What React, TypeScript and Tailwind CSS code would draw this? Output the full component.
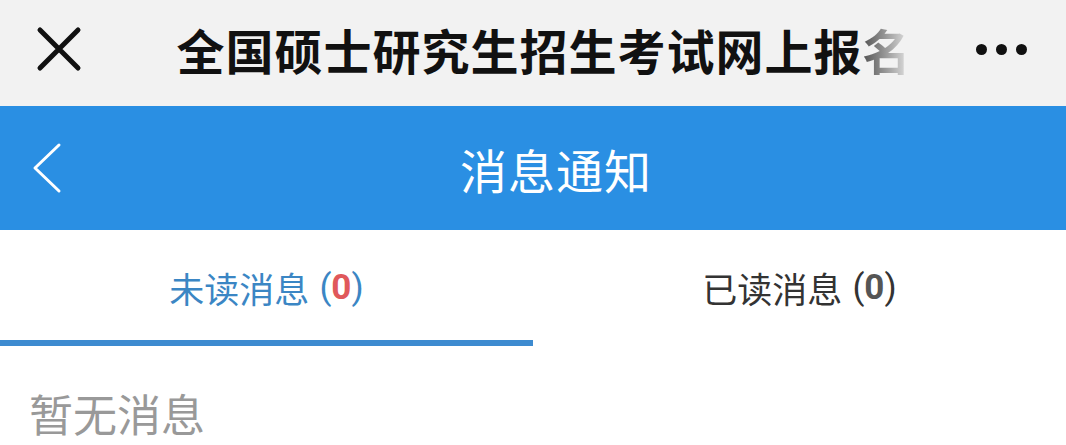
import React, { useState } from 'react';

const cjk = { fontFamily: '"Noto Sans CJK SC", "Noto Sans", sans-serif' };

const App = () => {
  const [tab, setTab] = useState(0);

  return (
    <div className="w-[1066px] h-[445px] overflow-hidden bg-white" style={cjk}>
      {/* wechat top bar */}
      <div className="h-[106px] bg-[#f2f2f2] flex items-center pb-[8px]">
        <div className="w-[120px] flex items-center pl-[36px]">
          <svg width="46" height="46" viewBox="0 0 46 46">
            <path d="M4 4 L42 42 M42 4 L4 42" stroke="#111" strokeWidth="5" strokeLinecap="round" />
          </svg>
        </div>
        <div className="flex-1 flex justify-center pl-[22px]">
          <h1 className="text-[48px] leading-none font-bold text-[#111] tracking-[1px]">
            全国硕士研究生招生考试网上报
            <span className="bg-gradient-to-r from-[#555] to-[#eee] bg-clip-text text-transparent">名</span>
          </h1>
        </div>
        <div className="w-[120px] flex items-center gap-[9px] pl-[30px]">
          <span className="w-[11px] h-[11px] rounded-full bg-[#111]" />
          <span className="w-[11px] h-[11px] rounded-full bg-[#111]" />
          <span className="w-[11px] h-[11px] rounded-full bg-[#111]" />
        </div>
      </div>

      {/* page header */}
      <div className="h-[124px] bg-[#2a8fe3] flex items-center">
        <div className="w-[120px] pl-[31px]">
          <svg width="32" height="52" viewBox="0 0 32 52">
            <path d="M28 3 L4 26 L28 49" stroke="#fff" strokeWidth="3" fill="none" strokeLinecap="round" strokeLinejoin="round" />
          </svg>
        </div>
        <div className="flex-1 flex justify-center pr-[74px]">
          <h2 className="text-[47px] leading-none text-white font-normal tracking-[1px]">消息通知</h2>
        </div>
      </div>

      {/* tabs */}
      <div className="grid grid-cols-2 h-[116px]">
        <button
          onClick={() => setTab(0)}
          className={`flex flex-col border-b-[6px] ${tab === 0 ? 'border-[#3d8bd0]' : 'border-transparent'}`}
        >
          <span className="flex-1 flex items-center justify-center pt-[4px] text-[35px] leading-none">
            <span className={tab === 0 ? 'text-[#3b86c4]' : 'text-[#333]'}>未读消息</span>
            <span className={`ml-[10px] ${tab === 0 ? 'text-[#3b86c4]' : 'text-[#333]'}`} style={{ fontFamily: 'Roboto, "Liberation Sans", sans-serif' }}>
              (<span className="text-[#e0585b] font-bold">0</span>)
            </span>
          </span>
        </button>
        <button
          onClick={() => setTab(1)}
          className={`flex flex-col border-b-[6px] ${tab === 1 ? 'border-[#3d8bd0]' : 'border-transparent'}`}
        >
          <span className="flex-1 flex items-center justify-center pt-[4px] text-[35px] leading-none">
            <span className={tab === 1 ? 'text-[#3b86c4]' : 'text-[#333]'}>已读消息</span>
            <span className={`ml-[10px] ${tab === 1 ? 'text-[#3b86c4]' : 'text-[#333]'}`} style={{ fontFamily: 'Roboto, "Liberation Sans", sans-serif' }}>
              (<span className="font-bold text-[#555]">0</span>)
            </span>
          </span>
        </button>
      </div>

      {/* empty state */}
      <div className="pl-[29px] pt-[45px]">
        <p className="text-[44px] leading-none text-[#999]">暂无消息</p>
      </div>
    </div>
  );
};

export default App;
